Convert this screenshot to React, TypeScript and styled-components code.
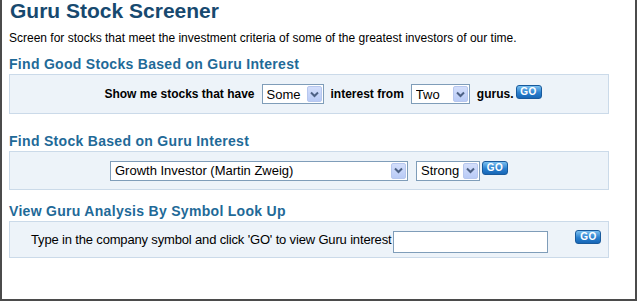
import styled, { createGlobalStyle } from "styled-components";

const GlobalStyle = createGlobalStyle`
  body {
    margin: 0;
    background: #ffffff;
    font-family: "Liberation Sans", Arial, sans-serif;
  }
`;

function Chevron() {
  return (
    <svg width="9" height="7" viewBox="0 0 9 7">
      <path d="M1 1.5 L4.5 5 L8 1.5" fill="none" stroke="#4d6185" strokeWidth="2" />
    </svg>
  );
}

function Select({ width, options, value }: { width: number; options: string[]; value: string }) {
  return (
    <SelectBox $width={width}>
      <NativeSelect defaultValue={value}>
        {options.map((o) => (
          <option key={o}>{o}</option>
        ))}
      </NativeSelect>
      <ArrowButton>
        <Chevron />
      </ArrowButton>
    </SelectBox>
  );
}

function App() {
  return (
    <>
      <GlobalStyle />
      <Frame>
        <Title>Guru Stock Screener</Title>
        <Intro>Screen for stocks that meet the investment criteria of some of the greatest investors of our time.</Intro>

        <Heading $gap={9}>Find Good Stocks Based on Guru Interest</Heading>
        <Panel $height={40} $pad={28} $gap={7} $justify="center">
          <Label>Show me stocks that have</Label>
          <Select width={62} value="Some" options={["Some", "Many", "All"]} />
          <Label>interest from</Label>
          <Select width={59} value="Two" options={["One", "Two", "Three", "Four"]} />
          <Label>gurus.</Label>
          <GoButton $shift={-5}>GO</GoButton>
        </Panel>

        <Heading $gap={18}>Find Stock Based on Guru Interest</Heading>
        <Panel $height={39} $pad={0} $gap={8} $justify="center">
          <Select width={298} value="Growth Investor (Martin Zweig)" options={["Growth Investor (Martin Zweig)", "Value Investor (Benjamin Graham)"]} />
          <Select width={64} value="Strong" options={["Strong", "Some"]} />
          <GoButton $shift={-6}>GO</GoButton>
        </Panel>

        <Heading $gap={12}>View Guru Analysis By Symbol Look Up</Heading>
        <Panel $height={37} $pad={21} $gap={8} $justify="flex-start">
          <Prompt>Type in the company symbol and click 'GO' to view Guru interest</Prompt>
          <SymbolInput type="text" />
          <GoButton $shift={19}>GO</GoButton>
        </Panel>
      </Frame>
    </>
  );
}

const Frame = styled.div`
  width: 637px;
  height: 301px;
  box-sizing: border-box;
  border: 2px solid #4b4b4b;
  border-top: none;
  padding: 0 26px 0 7px;
  background: #ffffff;
`;

const Title = styled.h1`
  margin: 0;
  padding-left: 1px;
  font-size: 21px;
  line-height: 22px;
  font-weight: bold;
  color: #17496f;
`;

const Intro = styled.p`
  margin: 8px 0 0;
  font-size: 12px;
  line-height: 16px;
  color: #000000;
`;

const Heading = styled.h2<{ $gap: number }>`
  margin: ${(p) => p.$gap}px 0 1px;
  font-size: 14px;
  line-height: 18px;
  font-weight: bold;
  letter-spacing: 0.3px;
  color: #1f6a98;
`;

const Panel = styled.div<{ $height: number; $pad: number; $gap: number; $justify: string }>`
  height: ${(p) => p.$height}px;
  box-sizing: border-box;
  border: 1px solid #cbdae9;
  background: #edf3f9;
  display: flex;
  align-items: center;
  justify-content: ${(p) => p.$justify};
  gap: ${(p) => p.$gap}px;
  padding-left: ${(p) => p.$pad}px;
`;

const Label = styled.span`
  font-size: 12px;
  font-weight: bold;
  color: #000000;
  white-space: nowrap;
`;

const Prompt = styled.span`
  font-size: 13px;
  letter-spacing: -0.16px;
  color: #000000;
  white-space: nowrap;
  margin-right: -6px;
`;

const SelectBox = styled.div<{ $width: number }>`
  width: ${(p) => p.$width}px;
  height: 20px;
  box-sizing: border-box;
  border: 1px solid #7f9db9;
  background: #ffffff;
  display: flex;
  align-items: stretch;
  padding: 1px;
`;

const NativeSelect = styled.select`
  flex: 1;
  min-width: 0;
  appearance: none;
  border: none;
  outline: none;
  background: transparent;
  font-family: "Liberation Sans", Arial, sans-serif;
  font-size: 13px;
  color: #000000;
  padding: 0 0 0 3px;
  margin: 0;
`;

const ArrowButton = styled.span`
  width: 15px;
  box-sizing: border-box;
  border: 1px solid #b7c7ee;
  border-radius: 2px;
  background: linear-gradient(#d3defb, #b9cbf6);
  display: flex;
  align-items: center;
  justify-content: center;
`;

const SymbolInput = styled.input`
  width: 155px;
  height: 22px;
  box-sizing: border-box;
  border: 1px solid #7f9db9;
  background: #ffffff;
  padding: 0 3px;
  margin: 4px 0 0;
  font-family: "Liberation Sans", Arial, sans-serif;
  font-size: 13px;
  outline: none;
`;

const GoButton = styled.button<{ $shift: number }>`
  width: 26px;
  height: 14px;
  box-sizing: border-box;
  margin: 0 0 5px ${(p) => p.$shift}px;
  padding: 0;
  border: 1px solid #195a9c;
  border-radius: 3px;
  background: linear-gradient(#7cc0f0, #2a80cf 55%, #1766b6);
  color: #ffffff;
  font-family: "Liberation Sans", Arial, sans-serif;
  font-size: 10px;
  font-weight: bold;
  line-height: 12px;
  letter-spacing: 0.5px;
  cursor: pointer;
`;

export default App;
